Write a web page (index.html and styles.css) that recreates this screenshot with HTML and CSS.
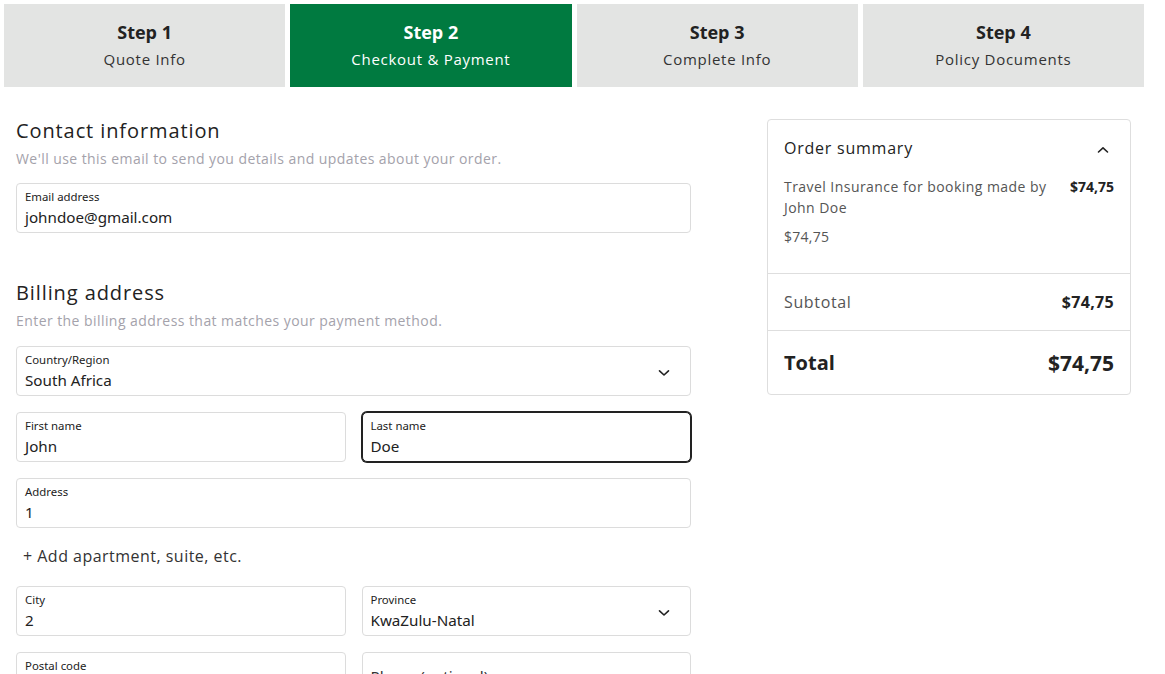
FILE: index.html
```html
<!DOCTYPE html>
<html lang="en">
<head>
<meta charset="utf-8">
<title>Checkout &amp; Payment</title>
<link rel="stylesheet" href="styles.css">
</head>
<body>
<div class="page">
  <nav class="steps">
    <div class="step"><span class="step-title">Step 1</span><span class="step-sub">Quote Info</span></div>
    <div class="step active"><span class="step-title">Step 2</span><span class="step-sub">Checkout &amp; Payment</span></div>
    <div class="step"><span class="step-title">Step 3</span><span class="step-sub">Complete Info</span></div>
    <div class="step"><span class="step-title">Step 4</span><span class="step-sub">Policy Documents</span></div>
  </nav>

  <main class="main">
    <section class="form-col">
      <div class="section">
        <h2 class="section-title">Contact information</h2>
        <p class="section-sub">We'll use this email to send you details and updates about your order.</p>
        <div class="field">
          <span class="field-label">Email address</span>
          <span class="field-value">johndoe@gmail.com</span>
        </div>
      </div>

      <div class="section billing">
        <h2 class="section-title">Billing address</h2>
        <p class="section-sub">Enter the billing address that matches your payment method.</p>
        <div class="rows">
          <div class="field select">
            <div class="field-text">
              <span class="field-label">Country/Region</span>
              <span class="field-value">South Africa</span>
            </div>
            <svg class="chev" width="12" height="8" viewBox="0 0 12 8"><path d="M1.5 1.8 L6 6 L10.5 1.8" fill="none" stroke="#222" stroke-width="1.6" stroke-linecap="round" stroke-linejoin="round"/></svg>
          </div>
          <div class="row-2">
            <div class="field">
              <span class="field-label">First name</span>
              <span class="field-value">John</span>
            </div>
            <div class="field focused">
              <span class="field-label">Last name</span>
              <span class="field-value">Doe</span>
            </div>
          </div>
          <div class="field">
            <span class="field-label">Address</span>
            <span class="field-value">1</span>
          </div>
          <div class="add-link">+ Add apartment, suite, etc.</div>
          <div class="row-2">
            <div class="field">
              <span class="field-label">City</span>
              <span class="field-value">2</span>
            </div>
            <div class="field select">
              <div class="field-text">
                <span class="field-label">Province</span>
                <span class="field-value">KwaZulu-Natal</span>
              </div>
              <svg class="chev" width="12" height="8" viewBox="0 0 12 8"><path d="M1.5 1.8 L6 6 L10.5 1.8" fill="none" stroke="#222" stroke-width="1.6" stroke-linecap="round" stroke-linejoin="round"/></svg>
            </div>
          </div>
          <div class="row-2">
            <div class="field">
              <span class="field-label">Postal code</span>
              <span class="field-value">3</span>
            </div>
            <div class="field placeholder">
              <span class="field-placeholder">Phone (optional)</span>
            </div>
          </div>
        </div>
      </div>
    </section>

    <aside class="summary">
      <div class="summary-top">
        <div class="summary-head">
          <span class="summary-title">Order summary</span>
          <svg class="chev-up" width="12" height="8" viewBox="0 0 12 8"><path d="M1.5 6 L6 1.8 L10.5 6" fill="none" stroke="#222" stroke-width="1.6" stroke-linecap="round" stroke-linejoin="round"/></svg>
        </div>
        <div class="item">
          <span class="item-name">Travel Insurance for booking made by John Doe</span>
          <span class="item-price">$74,75</span>
        </div>
        <div class="item-sub">$74,75</div>
      </div>
      <div class="summary-row">
        <span class="sub-label">Subtotal</span>
        <span class="sub-value">$74,75</span>
      </div>
      <div class="summary-row total">
        <span class="total-label">Total</span>
        <span class="total-value">$74,75</span>
      </div>
    </aside>
  </main>
</div>
</body>
</html>
```

FILE: styles.css
```css
* { box-sizing: border-box; }

html, body {
  margin: 0;
  padding: 0;
  background: #fff;
  height: 674px;
  overflow: hidden;
}

body {
  font-family: "Open Sans", "Noto Sans", sans-serif;
  color: #222;
  letter-spacing: 0.042em;
}

.page {
  width: 1144px;
}

/* steps */
.steps {
  display: grid;
  grid-template-columns: repeat(4, 1fr);
  column-gap: 5px;
  padding: 4px 0 0 4px;
}

.step {
  height: 83px;
  background: #e3e4e3;
  display: flex;
  flex-direction: column;
  align-items: center;
  justify-content: center;
  gap: 6px;
  color: #222;
  padding-bottom: 2px;
}

.step.active {
  background: #007a40;
  color: #fff;
}

.step-title {
  font-size: 18px;
  font-weight: 700;
  line-height: 22px;
  letter-spacing: 0;
}

.step-sub {
  font-size: 15px;
  line-height: 20px;
  color: #333;
  letter-spacing: 0.048em;
}

.step.active .step-sub { color: #fff; }

/* main */
.main {
  display: grid;
  grid-template-columns: 675px 364px;
  column-gap: 76px;
  padding: 32px 0 0 16px;
  align-items: start;
}

.section-title {
  margin: 0;
  font-size: 20px;
  font-weight: 400;
  line-height: 24px;
  color: #222;
  letter-spacing: 0.045em;
}

.section-sub {
  margin: 7px 0 15px;
  font-size: 14px;
  line-height: 18px;
  color: #a4a2ab;
  letter-spacing: 0.031em;
}

.billing {
  margin-top: 48px;
}

.billing .section-sub {
  margin-bottom: 16px;
}

.rows {
  display: flex;
  flex-direction: column;
  gap: 16px;
}

.row-2 {
  display: grid;
  grid-template-columns: 1fr 1fr;
  column-gap: 16px;
}

.field {
  height: 50px;
  border: 1px solid #dcdcdc;
  border-radius: 4px;
  padding: 4px 8px 3px;
  display: flex;
  flex-direction: column;
  font-family: "Noto Sans", "Open Sans", sans-serif;
  letter-spacing: 0;
  background: #fff;
}

.field.select {
  flex-direction: row;
  align-items: center;
  justify-content: space-between;
  padding-right: 20px;
}

.field-text {
  display: flex;
  flex-direction: column;
  align-self: stretch;
}

.field.focused {
  border-color: #222;
  box-shadow: 0 0 0 1px #222;
  border-radius: 5px;
}

.field-label {
  font-size: 11.4px;
  line-height: 17px;
  color: #222;
}

.field-value {
  font-size: 15.2px;
  line-height: 24px;
  color: #222;
}

.field.placeholder {
  justify-content: center;
}

.field-placeholder {
  font-size: 15.2px;
  line-height: 24px;
  color: #333;
  margin-top: -4px;
}

.chev { display: block; margin-top: 3px; }

.add-link {
  height: 26px;
  line-height: 24px;
  padding-left: 7px;
  font-size: 16px;
  color: #333;
  letter-spacing: 0.03em;
}

/* summary */
.summary {
  border: 1px solid #dedede;
  border-radius: 4px;
  color: #222;
}

.summary-top {
  padding: 17px 16px 26px;
  border-bottom: 1px solid #dedede;
}

.summary-head {
  display: flex;
  justify-content: space-between;
  align-items: center;
  height: 22px;
}

.summary-title {
  font-size: 16px;
  line-height: 22px;
  letter-spacing: 0.048em;
}

.chev-up {
  display: block;
  margin-right: 5px;
  margin-top: 4px;
}

.item {
  display: flex;
  justify-content: space-between;
  gap: 16px;
  margin-top: 17px;
}

.item-name {
  font-size: 14px;
  line-height: 21px;
  color: #555;
  max-width: 275px;
  letter-spacing: 0.032em;
}

.item-price {
  font-size: 14px;
  line-height: 21px;
  font-weight: 700;
  white-space: nowrap;
  letter-spacing: 0;
}

.item-sub {
  margin-top: 8px;
  font-size: 14px;
  line-height: 21px;
  color: #555;
  letter-spacing: 0.02em;
}

.summary-row {
  display: flex;
  justify-content: space-between;
  align-items: center;
  padding: 0 16px;
  height: 57px;
  border-bottom: 1px solid #dedede;
}

.summary-row.total {
  height: 63px;
  border-bottom: none;
}

.sub-label {
  font-size: 16px;
  color: #555;
  letter-spacing: 0.04em;
}

.sub-value {
  font-size: 16px;
  font-weight: 700;
  letter-spacing: 0.02em;
}

.total-label {
  font-size: 20px;
  font-weight: 700;
  letter-spacing: 0;
}

.total-value {
  font-size: 21px;
  font-weight: 700;
  letter-spacing: 0;
}
```
